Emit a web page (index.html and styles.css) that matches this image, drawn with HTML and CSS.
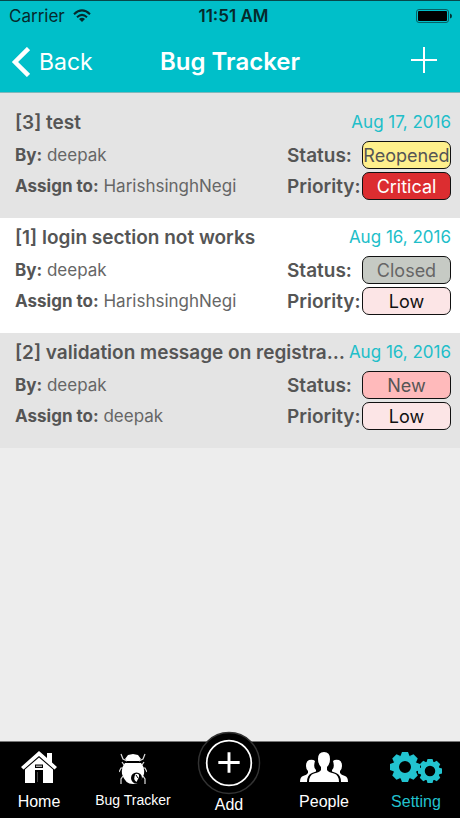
FILE: index.html
```html
<!DOCTYPE html>
<html lang="en">
<head>
<meta charset="utf-8">
<meta name="viewport" content="width=device-width, initial-scale=1">
<title>Bug Tracker</title>
<link rel="stylesheet" href="styles.css">
</head>
<body>
<div class="app">
  <header class="top">
    <div class="status-bar">
      <div class="carrier">
        <span>Carrier</span>
        <svg width="18" height="14" viewBox="0 0 18 14" aria-hidden="true"><g fill="none" stroke="#062a2c" stroke-width="2"><path d="M1 5.2Q9-2.4 17 5.2"/><path d="M4 8.2Q9 3.6 14 8.2"/></g><path d="M9 13L6 10Q9 7.6 12 10Z" fill="#062a2c"/></svg>
      </div>
      <span class="clock">11:51 AM</span>
      <svg class="battery" width="36" height="14" viewBox="0 0 36 14" aria-hidden="true"><rect x=".5" y=".5" width="32" height="13" rx="2.5" fill="none" stroke="#075f63"/><rect x="2" y="2" width="29" height="10" rx="1" fill="#000"/><path d="M34 4.5Q36 5 36 7T34 9.500Z" fill="#033"/></svg>
    </div>
    <nav class="nav">
      <button class="back" type="button">
        <svg width="19" height="30" viewBox="0 0 19 30" aria-hidden="true"><path d="M17.500 1.500L4 15L17.500 28.500" fill="none" stroke="#fff" stroke-width="4.500"/></svg>
        <span>Back</span>
      </button>
      <h1>Bug Tracker</h1>
      <button class="plus" type="button" aria-label="Add bug">
        <svg width="26" height="30" viewBox="0 0 26 30" aria-hidden="true"><path d="M13 0V26M0 13H26" stroke="#fff" stroke-width="2"/></svg>
      </button>
    </nav>
  </header>

  <main class="list">
    <article class="bug shaded">
      <div class="head"><h2>[3] test</h2><time datetime="2016-08-17">Aug 17, 2016</time></div>
      <p><b>By:</b> deepak</p><span class="label">Status:</span><span class="badge reopened">Reopened</span>
      <p><b>Assign to:</b> HarishsinghNegi</p><span class="label">Priority:</span><span class="badge critical">Critical</span>
    </article>
    <article class="bug">
      <div class="head"><h2>[1] login section not works</h2><time datetime="2016-08-16">Aug 16, 2016</time></div>
      <p><b>By:</b> deepak</p><span class="label">Status:</span><span class="badge closed">Closed</span>
      <p><b>Assign to:</b> HarishsinghNegi</p><span class="label">Priority:</span><span class="badge low">Low</span>
    </article>
    <article class="bug shaded">
      <div class="head"><h2>[2] validation message on registration</h2><time datetime="2016-08-16">Aug 16, 2016</time></div>
      <p><b>By:</b> deepak</p><span class="label">Status:</span><span class="badge new">New</span>
      <p><b>Assign to:</b> deepak</p><span class="label">Priority:</span><span class="badge low">Low</span>
    </article>
  </main>

  <footer class="tabs">
    <a href="#home">
      <svg width="36" height="34" viewBox="0 0 36 34" aria-hidden="true"><path d="M18 1L26 8V3H31V12.500L36 17L33.500 19.500L18 6L2.500 19.500L0 17Z" fill="#fff"/><path d="M18 7.500L32 19.500V33H22V20H14V33H4V19.500Z" fill="#fff"/><path d="M14 14.500H22V18H14Z" fill="#000"/><path d="M15 15.500H21V17H15Z" fill="#aaa"/><path d="M16 22H17V32H16Z" fill="#444"/></svg>
      <span>Home</span>
    </a>
    <a href="#bugs" class="small">
      <svg width="28" height="34" viewBox="0 0 28 34" aria-hidden="true"><g fill="none" stroke="#ddd" stroke-width="1.200"><path d="M8 8L4 6L2 1M20 8L24 6L26 1M5 15L2 15L0 19M23 15L26 15L28 19M4 23L2 26V31M24 23L26 26V31M5 12L3 9M23 12L25 9"/></g><path d="M9 2L14 1L19 2L22 6L20 8H8L6 6Z" fill="#fff"/><path d="M6 10H22Q26 15 25 21Q22 31 14 31Q6 31 3 21Q2 15 6 10Z" fill="#fff"/><circle cx="17.500" cy="25" r="5.500" fill="#000"/><path d="M16.500 21Q20.500 20 20 24L17.500 29Q13.500 26 16.500 21Z" fill="#fff"/><path d="M17 22L19 25" stroke="#000"/></svg>
      <span>Bug Tracker</span>
    </a>
    <a href="#add" class="add">
      <svg width="64" height="64" viewBox="0 0 66 66" aria-hidden="true"><circle cx="33" cy="33" r="31.500" fill="#000" stroke="#333" stroke-width="1.500"/><circle cx="33" cy="33" r="23" fill="none" stroke="#fff" stroke-width="1.800"/><path d="M33 22V43M22 32.500H44" stroke="#fff" stroke-width="3"/></svg>
      <span>Add</span>
    </a>
    <a href="#people">
      <svg width="48" height="34" viewBox="0 0 48 34" aria-hidden="true"><g fill="#fff"><path d="M18 9Q18 2 24 2Q30 2 30 9Q30 14 27 17V20Q28 22 34 23.500Q39 25 39 32H9Q9 25 14 23.500Q20 22 21 20V17Q18 14 18 9Z"/><path d="M15 11Q13 9 9 10Q6 11 6 16Q6 19 8 21V23Q7 25 3 26Q0 27 0 32H7Q7 25 12 23L16 21.500V20Q13 18 15 11Z"/><path d="M33 11Q35 9 39 10Q42 11 42 16Q42 19 40 21V23Q41 25 45 26Q48 27 48 32H41Q41 25 36 23L32 21.500V20Q35 18 33 11Z"/></g></svg>
      <span>People</span>
    </a>
    <a href="#setting" class="active">
      <svg width="52" height="34" viewBox="0 0 52 34" aria-hidden="true"><g fill="none" stroke="#22c3cf"><circle cx="15" cy="17" r="9" stroke-width="6"/><circle cx="40" cy="21" r="7.500" stroke-width="4.500"/></g><g fill="#22c3cf"><path id="tooth" d="M10.500 6L12 2H18L19.500 6Z"/><use href="#tooth" transform="rotate(45 15 17)"/><use href="#tooth" transform="rotate(90 15 17)"/><use href="#tooth" transform="rotate(135 15 17)"/><use href="#tooth" transform="rotate(180 15 17)"/><use href="#tooth" transform="rotate(225 15 17)"/><use href="#tooth" transform="rotate(270 15 17)"/><use href="#tooth" transform="rotate(315 15 17)"/><path id="cog" d="M36.500 12.500L37.500 9H42.500L43.500 12.500Z"/><use href="#cog" transform="rotate(45 40 21)"/><use href="#cog" transform="rotate(90 40 21)"/><use href="#cog" transform="rotate(135 40 21)"/><use href="#cog" transform="rotate(180 40 21)"/><use href="#cog" transform="rotate(225 40 21)"/><use href="#cog" transform="rotate(270 40 21)"/><use href="#cog" transform="rotate(315 40 21)"/></g></svg>
      <span>Setting</span>
    </a>
  </footer>
</div>
</body>
</html>
```
FILE: styles.css
```css
* {
  box-sizing: border-box;
}

body {
  margin: 0;
  font-family: Inter, "Liberation Sans", sans-serif;
  color: #555;
  background: #ededed;
}

h1, h2, p {
  margin: 0;
}

button {
  padding: 0;
  border: 0;
  background: none;
  color: inherit;
  font: inherit;
}

svg {
  display: block;
}

.app {
  display: flex;
  flex-direction: column;
  min-height: 100vh;
}

.top {
  background: #00bfc9;
  border-top: 1px solid #07474b;
  border-bottom: 1px solid #7fb8bb;
}

.status-bar,
.nav {
  display: grid;
  grid-template-columns: 1fr auto 1fr;
  align-items: center;
}

.status-bar {
  height: 30px;
  padding: 0 8px 0 9px;
  font-size: 17px;
  color: #062a2c;
}

.carrier {
  display: flex;
  align-items: center;
  gap: 8px;
}

.clock {
  padding-left: 6px;
  font-weight: 600;
}

.battery {
  justify-self: end;
}

.nav {
  height: 61px;
  padding: 0 23px 0 11px;
  color: #fff;
}

.nav h1 {
  padding-left: 12px;
  font-size: 24px;
  font-weight: 600;
}

.back {
  display: flex;
  align-items: center;
  gap: 9px;
  font-size: 23px;
}

.plus {
  justify-self: end;
}

.list {
  flex: 1;
}

.bug {
  display: grid;
  grid-template-columns: minmax(0, 1fr) 75px 89px;
  grid-template-rows: 32px 28px 28px;
  row-gap: 3px;
  align-items: center;
  padding: 3px 9px 18px 15px;
  background: #fff;
  font-size: 17px;
}

.bug:first-child {
  padding-top: 13px;
}

.shaded {
  background: #e4e4e4;
}

.bug p {
  color: #666;
}

.head {
  grid-column: 1 / -1;
  display: flex;
  align-items: center;
}

.head h2 {
  flex: 1;
  min-width: 0;
  overflow: hidden;
  text-overflow: ellipsis;
  white-space: nowrap;
  font-size: 19px;
  font-weight: 600;
}

.head time {
  color: #21bec9;
}

.bug b {
  font-weight: 700;
  color: #555;
}

.label {
  font-size: 19px;
  font-weight: 600;
}

.badge {
  display: flex;
  align-items: center;
  justify-content: center;
  height: 28px;
  border: 1px solid #111;
  border-radius: 7px;
  font-size: 18px;
}

.reopened {
  background: #fff08c;
}

.critical {
  background: #dc2d30;
  color: #fff;
}

.closed {
  background: #c6cac4;
  color: #666;
}

.new {
  background: #ffbabb;
}

.low {
  background: #fce5e6;
  color: #111;
}

.tabs {
  display: grid;
  grid-template-columns: 78fr 110fr 82fr 108fr 76fr;
  grid-template-rows: 76px;
  padding-right: 6px;
  border-top: 1px solid #777;
  background: #000;
  font-family: "Liberation Sans", Arial, sans-serif;
  font-size: 16px;
  line-height: 20px;
}

.tabs a {
  display: flex;
  flex-direction: column;
  align-items: center;
  justify-content: flex-end;
  gap: 8px;
  padding-bottom: 6px;
  color: #fff;
  text-decoration: none;
  white-space: nowrap;
}

.tabs svg {
  flex: none;
}

.tabs .small {
  gap: 3px;
  padding-bottom: 8px;
  font-size: 14px;
}

.tabs .add {
  gap: 0;
  padding-bottom: 3px;
}

.tabs .active {
  color: #22c3cf;
}
```
